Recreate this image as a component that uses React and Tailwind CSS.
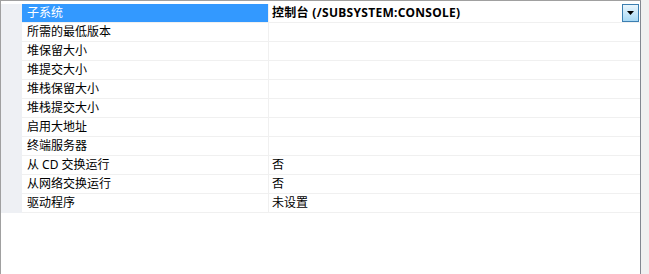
import React from "react";

const rows = [
  { name: "子系统", value: "控制台 (/SUBSYSTEM:CONSOLE)", selected: true },
  { name: "所需的最低版本", value: "" },
  { name: "堆保留大小", value: "" },
  { name: "堆提交大小", value: "" },
  { name: "堆栈保留大小", value: "" },
  { name: "堆栈提交大小", value: "" },
  { name: "启用大地址", value: "" },
  { name: "终端服务器", value: "" },
  { name: "从 CD 交换运行", value: "否" },
  { name: "从网络交换运行", value: "否" },
  { name: "驱动程序", value: "未设置" },
];

function DropButton() {
  return (
    <div className="ml-auto mr-px w-[17px] h-[18px] border border-[#3c7fb1] bg-gradient-to-b from-[#eaf6fd] to-[#a7d9f5] flex items-center justify-center">
      <svg width="7" height="4" viewBox="0 0 7 4">
        <path d="M0 0h7L3.5 4z" fill="#000" />
      </svg>
    </div>
  );
}

export default function App() {
  return (
    <div
      className="flex w-[649px] h-[274px] bg-[#f0f0f0] text-[12px] text-black"
      style={{ fontFamily: '"Noto Sans", "Noto Sans CJK SC", sans-serif' }}
    >
      <div className="w-[641px] h-full bg-white border-l border-t border-r border-l-[#a0a0a0] border-t-[#a0a0a0] border-r-[#828790] pt-[3px]">
        {rows.map((r) => (
          <div key={r.name} className="flex h-[19px]">
            <div className="w-[21px] shrink-0 bg-[#eef0f4]" />
            <div className="flex flex-1 border-b border-[#f0f0f0]">
              <div
                className={
                  "w-[246px] shrink-0 pl-[5px] leading-[18px] whitespace-nowrap " +
                  (r.selected ? "bg-[#3399ff] text-white" : "")
                }
              >
                {r.name}
              </div>
              <div className="flex flex-1 items-center border-l border-[#f0f0f0] pl-[3px] whitespace-nowrap">
                <span className={"leading-[18px] " + (r.selected ? "font-bold tracking-[0.3px]" : "")}>
                  {r.value}
                </span>
                {r.selected && <DropButton />}
              </div>
            </div>
          </div>
        ))}
      </div>
    </div>
  );
}
